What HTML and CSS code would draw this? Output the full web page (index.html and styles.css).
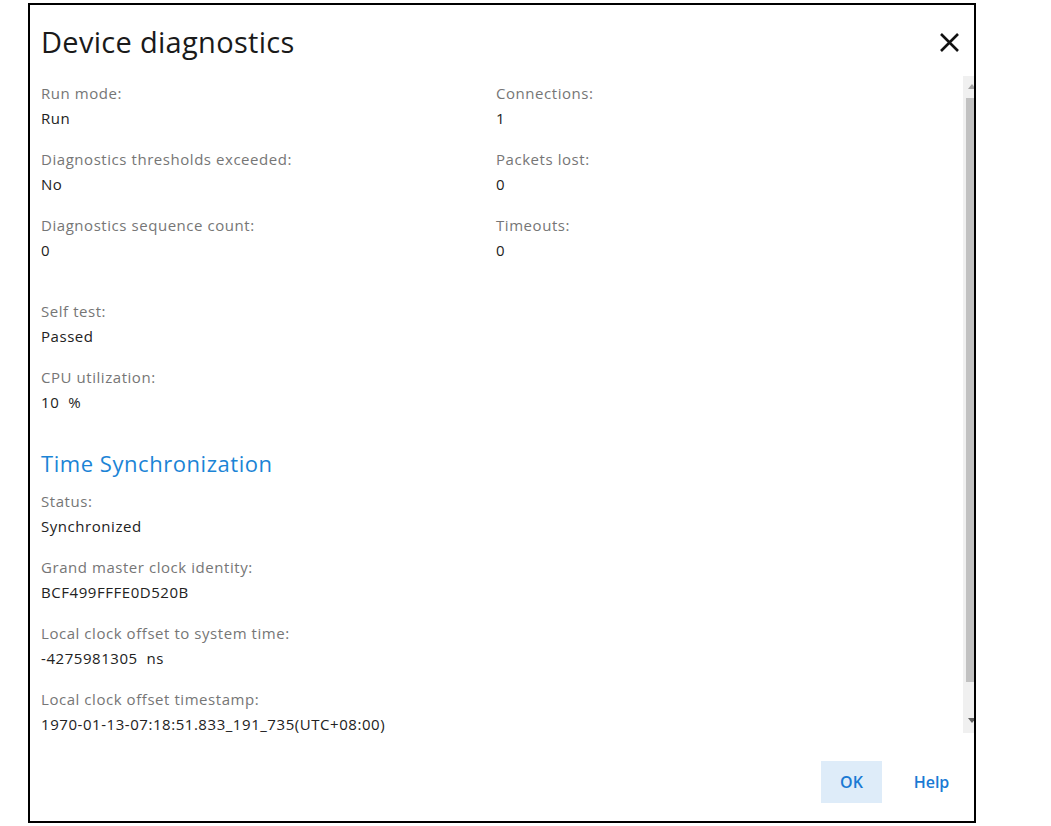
FILE: index.html
```html
<!DOCTYPE html>
<html lang="en">
<head>
    <meta charset="UTF-8">
    <meta name="viewport" content="width=device-width, initial-scale=1.0">
    <title>Device diagnostics</title>
    <link rel="stylesheet" href="styles.css">
</head>

<body>
    <div class="dialog">
        <!-- header -->
        <div class="dialog-header">
            <div class="title">Device diagnostics</div>
            <button class="close-btn" aria-label="Close">
                <svg width="21" height="21" viewBox="0 0 21 21">
                    <path d="M2 2 L19 19 M19 2 L2 19" stroke="#111" stroke-width="2.6" fill="none"/>
                </svg>
            </button>
        </div>

        <!-- body with scrollbar -->
        <div class="dialog-body">
            <div class="content">
                <div class="grid">
                    <div class="field">
                        <div class="label">Run mode:</div>
                        <div class="value">Run</div>
                    </div>
                    <div class="field">
                        <div class="label">Connections:</div>
                        <div class="value">1</div>
                    </div>
                    <div class="field">
                        <div class="label">Diagnostics thresholds exceeded:</div>
                        <div class="value">No</div>
                    </div>
                    <div class="field">
                        <div class="label">Packets lost:</div>
                        <div class="value">0</div>
                    </div>
                    <div class="field">
                        <div class="label">Diagnostics sequence count:</div>
                        <div class="value">0</div>
                    </div>
                    <div class="field">
                        <div class="label">Timeouts:</div>
                        <div class="value">0</div>
                    </div>
                </div>

                <div class="field">
                    <div class="label">Self test:</div>
                    <div class="value">Passed</div>
                </div>
                <div class="field">
                    <div class="label">CPU utilization:</div>
                    <div class="value">10&nbsp; %</div>
                </div>

                <div class="section-title">Time Synchronization</div>

                <div class="field">
                    <div class="label">Status:</div>
                    <div class="value">Synchronized</div>
                </div>
                <div class="field">
                    <div class="label">Grand master clock identity:</div>
                    <div class="value">BCF499FFFE0D520B</div>
                </div>
                <div class="field">
                    <div class="label">Local clock offset to system time:</div>
                    <div class="value">-4275981305&nbsp; ns</div>
                </div>
                <div class="field">
                    <div class="label">Local clock offset timestamp:</div>
                    <div class="value">1970-01-13-07:18:51.833_191_735(UTC+08:00)</div>
                </div>
            </div>

            <div class="scrollbar">
                <div class="arrow arrow-up"></div>
                <div class="thumb"></div>
                <div class="arrow arrow-down"></div>
            </div>
        </div>

        <!-- footer -->
        <div class="dialog-footer">
            <button class="btn btn-primary">OK</button>
            <button class="btn btn-link">Help</button>
        </div>
    </div>
</body>
</html>
```

FILE: styles.css
```css
* {
    margin: 0;
    padding: 0;
    box-sizing: border-box;
}

body {
    font-family: "Open Sans", "Noto Sans", sans-serif;
    background: #fff;
    width: 100vw;
    height: 100vh;
    overflow: hidden;
}

.dialog {
    margin: 3px 0 0 28px;
    width: 948px;
    height: 820px;
    border: 2px solid #000;
    background: #fff;
    display: flex;
    flex-direction: column;
}

/* header */
.dialog-header {
    display: flex;
    align-items: center;
    justify-content: space-between;
    padding: 17px 14px 0 11px;
    margin-bottom: 14px;
}

.title {
    font-size: 29px;
    line-height: 40px;
    color: #1a1a1a;
    letter-spacing: 0.3px;
}

.close-btn {
    background: none;
    border: none;
    width: 21px;
    height: 21px;
    cursor: pointer;
    display: flex;
}

/* body */
.dialog-body {
    display: flex;
    height: 657px;
}

.content {
    flex: 1;
    overflow: hidden;
    padding: 5px 0 0 11px;
}

.grid {
    display: grid;
    grid-template-columns: 455px 1fr;
    margin-bottom: 20px;
}

.field {
    margin-bottom: 16px;
    font-size: 15px;
    line-height: 25px;
    letter-spacing: 0.55px;
}

.label {
    color: #767676;
}

.value {
    color: #222;
}

.section-title {
    font-size: 22px;
    line-height: 30px;
    letter-spacing: 0.55px;
    color: #1b84d6;
    margin: 33px 0 11px;
}

/* fake scrollbar */
.scrollbar {
    width: 11px;
    background: #f0f0f0;
    position: relative;
    overflow: hidden;
}

.thumb {
    position: absolute;
    left: 3px;
    right: 0;
    top: 22px;
    bottom: 51px;
    background: #c1c1c1;
}

.arrow {
    position: absolute;
    left: 5px;
    width: 0;
    height: 0;
    border-left: 4px solid transparent;
    border-right: 4px solid transparent;
}

.arrow-up {
    top: 8px;
    border-bottom: 5px solid #a3a3a3;
}

.arrow-down {
    bottom: 10px;
    border-top: 5px solid #606060;
}

/* footer */
.dialog-footer {
    flex: 1;
    display: flex;
    justify-content: flex-end;
    align-items: flex-start;
    padding: 28px 12px 0 0;
    gap: 19px;
}

.btn {
    width: 61px;
    height: 42px;
    border: none;
    font-family: inherit;
    font-size: 16px;
    font-weight: 600;
    color: #1a7ad4;
    cursor: pointer;
}

.btn-primary {
    background: #deecf9;
}

.btn-link {
    background: none;
}
```
